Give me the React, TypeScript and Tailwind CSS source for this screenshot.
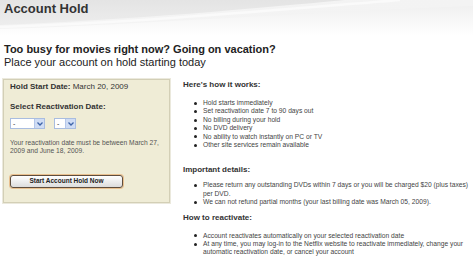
import React from "react";

const Dot = () => (
  <span className="flex h-[8.4px] w-[20px] shrink-0 items-center">
    <span className="ml-[11px] h-[3px] w-[3px] rounded-full bg-[#222]" />
  </span>
);

function Item({ children }: { children: React.ReactNode }) {
  return (
    <li className="flex">
      <Dot />
      <span className="whitespace-nowrap">{children}</span>
    </li>
  );
}

function Select({ w }: { w: number }) {
  return (
    <div
      className="flex h-[11px] items-stretch border border-[#a9bde0] bg-white"
      style={{ width: w }}
    >
      <span className="flex-1 pl-[2px] text-[7px] leading-[9px] text-[#333]">-</span>
      <span className="flex w-[10px] items-center justify-center bg-[#cfdcf4] border-l border-[#b4c7ea]">
        <svg width="6" height="4" viewBox="0 0 6 4">
          <path d="M0.5 0.5 L3 3 L5.5 0.5" fill="none" stroke="#3e64a8" strokeWidth="1.3" />
        </svg>
      </span>
    </div>
  );
}

export default function App() {
  return (
    <div className="relative h-[265px] w-[473px] overflow-hidden bg-white font-['Liberation_Sans',Arial,sans-serif] text-[#333]">
      {/* header */}
      <div className="relative h-[36px] bg-gradient-to-b from-[#e6e6e6] to-white">
        <svg className="absolute inset-0" width="473" height="36" viewBox="0 0 473 36">
          <defs>
            <linearGradient id="g1" x1="0" y1="0" x2="0" y2="1">
              <stop offset="0" stopColor="#e4e4e4" />
              <stop offset="1" stopColor="#ededed" />
            </linearGradient>
            <linearGradient id="g2" x1="0" y1="0" x2="0" y2="1">
              <stop offset="0" stopColor="#f0f0f0" />
              <stop offset="1" stopColor="#ffffff" />
            </linearGradient>
            <linearGradient id="g3" x1="0" y1="0" x2="1" y2="0">
              <stop offset="0" stopColor="#f4f4f4" />
              <stop offset="1" stopColor="#f3f3f3" />
            </linearGradient>
          </defs>
          <rect x="0" y="0" width="473" height="36" fill="url(#g3)" />
          <path d="M0 0 H345 C 260 8 130 20 0 25 Z" fill="url(#g1)" />
          <path d="M0 29 C 130 25 270 14 473 6 V 36 H 0 Z" fill="url(#g2)" />
          <path d="M0 27 C 130 23 265 11 400 0" fill="none" stroke="#fafafa" strokeWidth="2.5" />
        </svg>
        <h1 className="relative pl-[4px] pt-[1px] text-[13px] font-bold leading-[15px] text-[#333]">
          Account Hold
        </h1>
      </div>

      {/* intro */}
      <div className="mt-[7px] pl-[4px] text-[11px] leading-[13px] text-[#222]">
        <p className="font-bold">Too busy for movies right now? Going on vacation?</p>
        <p>Place your account on hold starting today</p>
      </div>

      {/* main */}
      <div className="mt-[10px] flex items-start">
        {/* left box */}
        <div className="ml-[3px] h-[124px] w-[167px] shrink-0 border border-[#d3cfb6] bg-[#efecd6] pl-[6px] pt-[2px] shadow-[0_0_0_1px_#ebe9dd]">
          <p className="whitespace-nowrap text-[8px] leading-[10px] text-[#333]">
            <span className="font-bold">Hold Start Date:</span> March 20, 2009
          </p>
          <p className="mt-[10px] text-[8px] font-bold leading-[10px] text-[#333]">
            Select Reactivation Date:
          </p>
          <div className="mt-[6px] flex gap-[9px]">
            <Select w={35} />
            <Select w={22} />
          </div>
          <p className="mt-[10px] whitespace-nowrap text-[6.7px] leading-[8.4px] text-[#555]">
            Your reactivation date must be between March 27,
            <br />
            2009 and June 18, 2009.
          </p>
          <button className="mt-[19px] flex h-[13px] w-[113px] items-center justify-center rounded-[3px] border border-[#5e4d3d] bg-gradient-to-b from-white to-[#dcdcdc] text-[6.5px] font-bold leading-none text-[#222] shadow-[0_0_0_1px_#e9c08f]">
            Start Account Hold Now
          </button>
        </div>

        {/* right column */}
        <div className="ml-[13px] flex-1 text-[6.7px] leading-[8.4px] text-[#444]">
          <h2 className="text-[8px] font-bold leading-[11px] text-[#333]">Here's how it works:</h2>
          <ul className="mt-[9px]">
            <Item>Hold starts immediately</Item>
            <Item>Set reactivation date 7 to 90 days out</Item>
            <Item>No billing during your hold</Item>
            <Item>No DVD delivery</Item>
            <Item>No ability to watch instantly on PC or TV</Item>
            <Item>Other site services remain available</Item>
          </ul>
          <h2 className="mt-[15px] text-[8px] font-bold leading-[11px] text-[#333]">Important details:</h2>
          <ul className="mt-[6px]">
            <Item>
              Please return any outstanding DVDs within 7 days or you will be charged $20 (plus taxes)
              <br />
              per DVD.
            </Item>
            <Item>We can not refund partial months (your last billing date was March 05, 2009).</Item>
          </ul>
          <h2 className="mt-[5px] text-[8px] font-bold leading-[11px] text-[#333]">How to reactivate:</h2>
          <ul className="mt-[9px]">
            <Item>Account reactivates automatically on your selected reactivation date</Item>
            <Item>
              At any time, you may log-in to the Netflix website to reactivate immediately, change your
              <br />
              automatic reactivation date, or cancel your account
            </Item>
          </ul>
        </div>
      </div>
    </div>
  );
}
